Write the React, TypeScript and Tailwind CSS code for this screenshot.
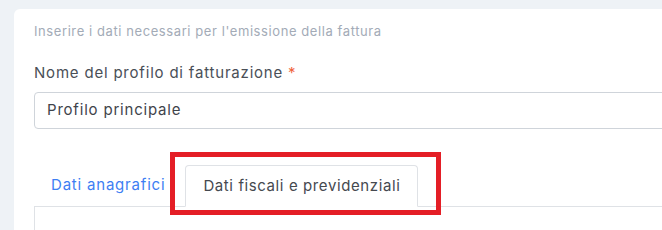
export default function App() {
  return (
    <div className="w-[662px] h-[230px] overflow-hidden bg-[#eef2f6] pl-[14px] pt-[9px] relative tracking-[0.05em]" style={{ fontFamily: 'Inter, "Open Sans", sans-serif' }}>
      <div className="w-[700px] h-[260px] bg-white rounded-tl-[6px] pl-[20px] pt-[12px]">
        <p className="text-[13px] leading-[20px] text-[#a3abb7] tracking-[0.045em]">Inserire i dati necessari per l'emissione della fattura</p>

        <label className="block mt-[22px] text-[15px] leading-[20px] text-[#4a4f57]">
          Nome del profilo di fatturazione <span className="text-[#f0643c]">*</span>
        </label>
        <div className="mt-[9px] h-[37px] border border-[#cfd4da] rounded-[4px] flex items-center pl-[12px] text-[15px] text-[#3f444b]">
          Profilo principale
        </div>

        <div className="mt-[36px] flex items-end border-b border-[#dfe2e6]">
          <div className="pl-[17px] pr-[20px] h-[41px] flex items-center text-[15px] text-[#3d7ef3]">Dati anagrafici</div>
          <div className="pl-[17px] pr-[17px] h-[42px] -mb-px flex items-center border border-[#dfe2e6] border-b-white bg-white rounded-t-[4px] text-[15px] text-[#45494f] tracking-[0.04em]">
            Dati fiscali e previdenziali
          </div>
        </div>
        <div className="h-[40px] border-l border-[#dfe2e6]" />
      </div>

      {/* annotation */}
      <div className="absolute left-[170px] top-[152px] w-[271px] h-[63px] border-[5px] border-[#e41e26]" />
    </div>
  )
}
